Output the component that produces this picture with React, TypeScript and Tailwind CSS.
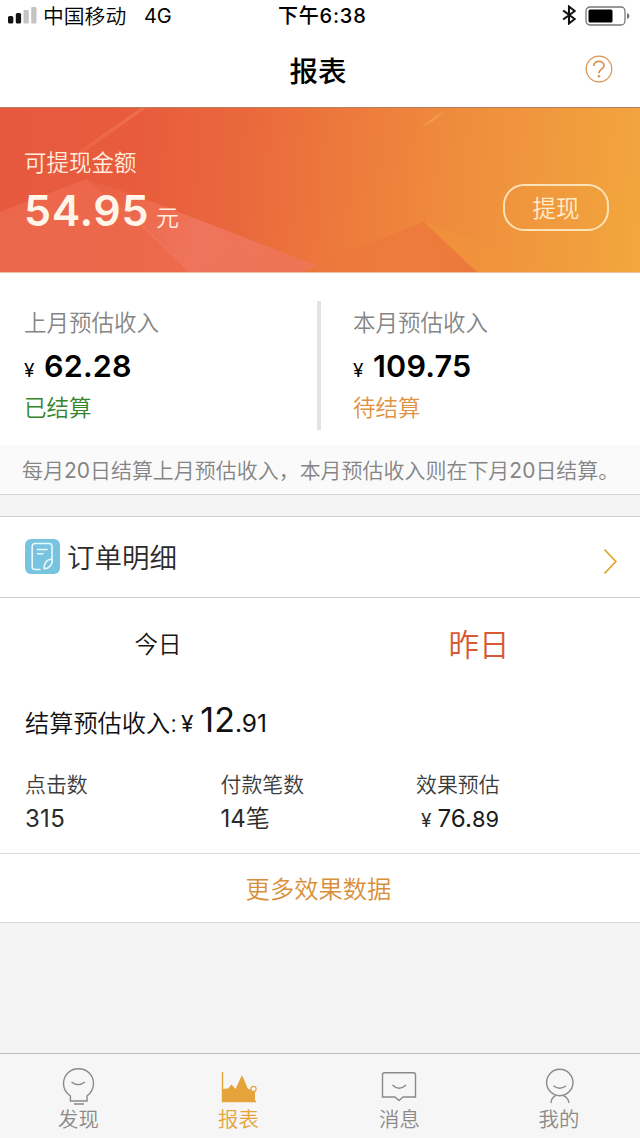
import type { ReactNode } from "react";

function StatusBar() {
  return (
    <div className="flex h-8 items-center pl-2 pr-[9px] text-black">
      <svg width="29" height="18" viewBox="0 0 29 18" aria-hidden="true">
        <rect x="0" y="9" width="5.3" height="7.5" rx="1.6" fill="#111" />
        <rect x="7.8" y="6" width="5.3" height="10.5" rx="1.6" fill="#111" />
        <rect x="15.5" y="3" width="5.3" height="13.5" rx="1" fill="#c4c4c4" />
        <rect x="23.2" y="0" width="5.3" height="16.5" rx="1" fill="#c4c4c4" />
      </svg>
      <span className="ml-[6px] w-[101px] whitespace-nowrap pt-px text-[20.8px] leading-8">中国移动</span>
      <span className="w-[134px] text-[20px] font-normal leading-8 tracking-[-0.2px]">4G</span>
      <span className="w-[284px] text-[20px] font-medium leading-8 tracking-[0.8px]">下午6:38</span>
      <svg width="14" height="20" viewBox="0 0 12 20" preserveAspectRatio="none" className="mt-[-2px]" fill="none" stroke="#111" strokeWidth="1.8" aria-hidden="true">
        <path d="M1 5.5 L11 14 L6 18.5 V1.5 L11 6 L1 14.5" />
      </svg>
      <svg width="46" height="20" viewBox="0 0 46 20" className="mt-[-1px] ml-[9px] shrink-0" aria-hidden="true">
        <rect x="1" y="1" width="39" height="18" rx="4" fill="white" stroke="#777" strokeWidth="1.3" />
        <rect x="3.5" y="3.5" width="24" height="13" rx="1.5" fill="#000" />
        <path d="M42 7 Q44.5 7.5 44.5 10 T42 13 Z" fill="#777" />
      </svg>
    </div>
  );
}

function Header() {
  return (
    <header className="grid h-[75px] grid-cols-[1fr_auto_1fr] items-center">
      <span />
      <h1 className="pr-[4px] pt-[2px] text-[28.5px] font-medium leading-[76px] text-black">报表</h1>
      <svg width="28" height="28" viewBox="0 0 28 28" className="mr-[27px] mb-[5px] justify-self-end" fill="none" stroke="#d9924f" aria-hidden="true">
        <circle cx="14" cy="14" r="12.8" strokeWidth="1.2" />
        <path d="M8.8 11 C8.8 4.8 19 5 19 10.6 C19 14.3 13.9 14 13.9 18.2" strokeWidth="1.7" />
        <circle cx="13.9" cy="21.3" r="1.2" fill="#d9924f" stroke="none" />
      </svg>
    </header>
  );
}

function Hero() {
  return (
    <section className="relative h-[166px] border-t border-b border-t-[#b98065] border-b-[#eebfa5] bg-[linear-gradient(95deg,#e7593e_0%,#e85c3d_22%,#ea683c_38%,#ed783c_52%,#ef8e3d_72%,#f2a63e_100%)]">
      <svg className="absolute inset-0" width="640" height="164" viewBox="0 0 640 164" aria-hidden="true">
        <defs>
          <linearGradient id="streak" x1="1" y1="0" x2="0" y2="1">
            <stop offset="0" stopColor="#ffa070" stopOpacity="0.28" />
            <stop offset="1" stopColor="#ffa070" stopOpacity="0.03" />
          </linearGradient>
          <linearGradient id="wing" gradientUnits="userSpaceOnUse" x1="86" y1="72" x2="318" y2="158">
            <stop offset="0" stopColor="#f57a62" stopOpacity="0.1" />
            <stop offset="0.5" stopColor="#f17a66" stopOpacity="0.75" />
            <stop offset="1" stopColor="#f17562" stopOpacity="0.65" />
          </linearGradient>
          <linearGradient id="fold" x1="0" y1="0" x2="1" y2="0">
            <stop offset="0" stopColor="#ea663b" stopOpacity="0" />
            <stop offset="1" stopColor="#e9683b" stopOpacity="0.6" />
          </linearGradient>
          <linearGradient id="shine" x1="0" y1="0" x2="1" y2="0">
            <stop offset="0" stopColor="#f29638" stopOpacity="0.55" />
            <stop offset="1" stopColor="#f29638" stopOpacity="0" />
          </linearGradient>
        </defs>
        <path d="M146 0 L90 40 L35 80 L86 38 L141 0Z" fill="url(#streak)" />
        <path d="M0 104 L86 71 L145 119 L190 164 H0Z" fill="#f2735a" fillOpacity="0.5" />
        <path d="M86 71 L145 91 L318 158 L300 164 H189 L145 122Z" fill="url(#wing)" />
        <path d="M320 154 L424 114 L477 164 H320Z" fill="url(#fold)" />
        <path d="M424 114 L565 164 H477Z" fill="url(#shine)" />
        <path d="M420 20 L434 9 L447 2 L432 14Z" fill="#fbb35d" fillOpacity="0.4" />
        <path d="M610 88 L640 68 V164 H592Z" fill="#f7ad35" fillOpacity="0.1" />
      </svg>
      <div className="relative flex h-full items-center justify-between pl-6 pr-[31px]">
        <div className="pt-[9px] text-[#ffeedd]">
          <div className="h-8 text-[22.5px] leading-8">可提现金额</div>
          <div className="flex h-[64px] items-baseline leading-[63px]">
            <span className="text-[43px] font-semibold tracking-[0.6px] text-[#fff5e8]">54.95</span>
            <span className="ml-[7px] text-[23px]">元</span>
          </div>
        </div>
        <button className="mt-[34px] h-[47px] w-[106px] rounded-[21px] border-2 border-[#ffe3b8] text-[23.5px] leading-[46px] text-[#ffeccb]">提现</button>
      </div>
    </section>
  );
}

function Income({ label, amount, status, tone }: { label: string; amount: string; status: string; tone: string }) {
  return (
    <div>
      <div className="h-10 text-[22.5px] leading-[42px] text-[#858585]">{label}</div>
      <div className="flex h-12 items-baseline leading-[48px] text-black">
        <span className="w-[20px] text-[19px] font-normal">¥</span>
        <span className="text-[30.5px] font-semibold tracking-[0.2px]">{amount}</span>
      </div>
      <div className={`h-9 text-[22.5px] leading-9 ${tone}`}>{status}</div>
    </div>
  );
}

function Summary() {
  return (
    <section className="bg-white">
      <div className="flex h-[172px] pt-[28px]">
        <div className="w-[317px] pl-6 pt-px">
          <Income label="上月预估收入" amount="62.28" status="已结算" tone="text-[#35862b]" />
        </div>
        <div className="h-[129px] w-1 bg-[#e3e3e3]" />
        <div className="pl-8 pt-px">
          <Income label="本月预估收入" amount="109.75" status="待结算" tone="text-[#df9342]" />
        </div>
      </div>
      <p className="h-[49px] whitespace-nowrap bg-[#fafafa] pl-[22px] text-[20.97px] leading-[52px] text-[#858585]">
        每月<span className="font-normal">20</span>日结算上月预估收入，本月预估收入则在下月<span className="font-normal">20</span>日结算。
      </p>
    </section>
  );
}

function OrderRow() {
  return (
    <div className="flex h-[82px] items-center border-y border-[#d0d0d0] bg-white pl-[25px] pr-[22px]">
      <svg width="35" height="35" viewBox="0 0 35 35" className="-mt-px" aria-hidden="true">
        <rect width="35" height="35" rx="6" fill="#78c3df" />
        <g fill="none" stroke="#e9faff" strokeWidth="1.6" strokeLinecap="round" strokeLinejoin="round">
          <path d="M15 30.5 H10 Q7.2 30.5 7.2 27.5 V7.5 Q7.2 4.5 10 4.5 H24 Q27 4.5 27 7.5 V20" />
          <path d="M12.5 10.5 H22 M12.5 14.8 H18" />
          <path d="M27 20 C22 20.5 19 24 19 29.5 C24 30.5 28 25 27 20Z" />
        </g>
      </svg>
      <span className="ml-[7px] pt-[2px] text-[27.5px] leading-[80px] text-[#2b2b2b]">订单明细</span>
      <svg width="15" height="27" viewBox="0 0 15 27" className="ml-auto mt-[9px]" fill="none" stroke="#e0a62d" strokeWidth="1.8" aria-hidden="true">
        <path d="M1.5 1.5 L12.8 13.5 L1.5 25.5" />
      </svg>
    </div>
  );
}

function Stat({ label, children }: { label: string; children: ReactNode }) {
  return (
    <div>
      <div className="h-[34px] text-[20.9px] leading-[35px] text-[#3c3c3c]">{label}</div>
      <div className="flex h-[34px] items-baseline text-[24px] leading-[35px] text-[#2b2b2b]">{children}</div>
    </div>
  );
}

function Report() {
  return (
    <section className="bg-white">
      <div className="grid h-[92px] grid-cols-2 items-center text-center">
        <button className="pr-1 text-[23.5px] leading-[94px] text-[#161616]">今日</button>
        <button className="pr-[2px] text-[30.5px] leading-[94px] text-[#d65a35]">昨日</button>
      </div>
      <div className="flex h-[77px] items-baseline pl-[25px] leading-[60px] text-[#111]">
        <span className="text-[24.2px]">结算预估收入:</span>
        <span className="ml-[4px] text-[22.5px] font-normal">¥</span>
        <span className="ml-[7px] text-[34px] font-normal">12</span>
        <span className="text-[24.5px] font-normal">.91</span>
      </div>
      <div className="grid h-[86px] grid-cols-[195.5px_195.5px_1fr] pl-[25px]">
        <Stat label="点击数">
          <span className="font-normal tracking-[0.3px]">315</span>
        </Stat>
        <Stat label="付款笔数">
          <span className="font-normal">14</span>笔
        </Stat>
        <Stat label="效果预估">
          <span className="ml-[5px] mr-[6px] text-[19px] font-normal">¥</span>
          <span className="text-[24.2px] font-normal text-[#1a1a1a]">76.</span>
          <span className="text-[21.8px] font-normal text-[#1a1a1a]">89</span>
        </Stat>
      </div>
      <button className="block h-[70px] w-full border-y border-[#d8d8d8] pr-[3px] text-center text-[24.3px] leading-[71px] text-[#d98f3a]">更多效果数据</button>
    </section>
  );
}

function Tab({ label, active = false, children }: { label: string; active?: boolean; children: ReactNode }) {
  return (
    <button className={active ? "flex flex-col items-center text-[#e5a43b]" : "flex flex-col items-center text-[#8a8a8a]"}>
      <svg width="40" height="42" viewBox="0 0 40 42" className="mt-[10px] mr-px" fill="none" stroke="currentColor" strokeWidth="1.4" aria-hidden="true">
        {children}
      </svg>
      <span className="text-[20.4px] leading-[28px]">{label}</span>
    </button>
  );
}

function TabBar() {
  return (
    <nav className="mt-auto grid h-[85px] grid-cols-[157px_163px_159px_160px] border-t border-[#bdbdbd] bg-[#f6f6f6]">
      <Tab label="发现">
        <path d="M12.4 37 V32 C7.5 28.5 5.5 24 5.5 19.5 C5.5 11 12 4.7 20.5 4.7 S35.5 11 35.5 19.5 C35.5 24 33.5 28.5 29 32 V37Z M16 40 H26" />
        <path d="M13.5 18 Q20 23.3 27 18" />
      </Tab>
      <Tab label="报表" active>
        <path d="M4.5 8 V37.5 H38" />
        <path d="M4 25 L10 24.5 L13.5 20.5 L17.5 25 L24 11 L30 25 L37 26 V38 H4Z" fill="currentColor" stroke="none" />
        <circle cx="35.5" cy="25" r="2.6" fill="#f6f6f6" strokeWidth="1.2" />
      </Tab>
      <Tab label="消息">
        <path d="M5.5 8.7 H34.5 Q36.5 8.7 36.5 10.7 V33 H24 L20 36.5 L16 33 H3.5 V10.7 Q3.5 8.7 5.5 8.7Z" />
        <path d="M13.5 21 Q20 27.5 27 21" />
      </Tab>
      <Tab label="我的">
        <circle cx="20.8" cy="18.5" r="13.2" />
        <path d="M14.5 21.8 Q20.5 26.8 27 21.8 M12 39 C12 35 15 32.3 17 31.3 M24 31.3 C27 32.5 29.5 35 30 39" />
      </Tab>
    </nav>
  );
}

export default function App() {
  return (
    <div className="flex h-[1138px] w-[640px] flex-col overflow-hidden bg-white font-['Inter','Noto_Sans_CJK_SC',sans-serif] font-[350]">
      <StatusBar />
      <Header />
      <Hero />
      <Summary />
      <div className="h-[22px] border-t border-[#d4d4d4] bg-[#f4f4f4]" />
      <OrderRow />
      <Report />
      <div className="flex flex-1 flex-col bg-[#f4f4f4]">
        <TabBar />
      </div>
    </div>
  );
}
